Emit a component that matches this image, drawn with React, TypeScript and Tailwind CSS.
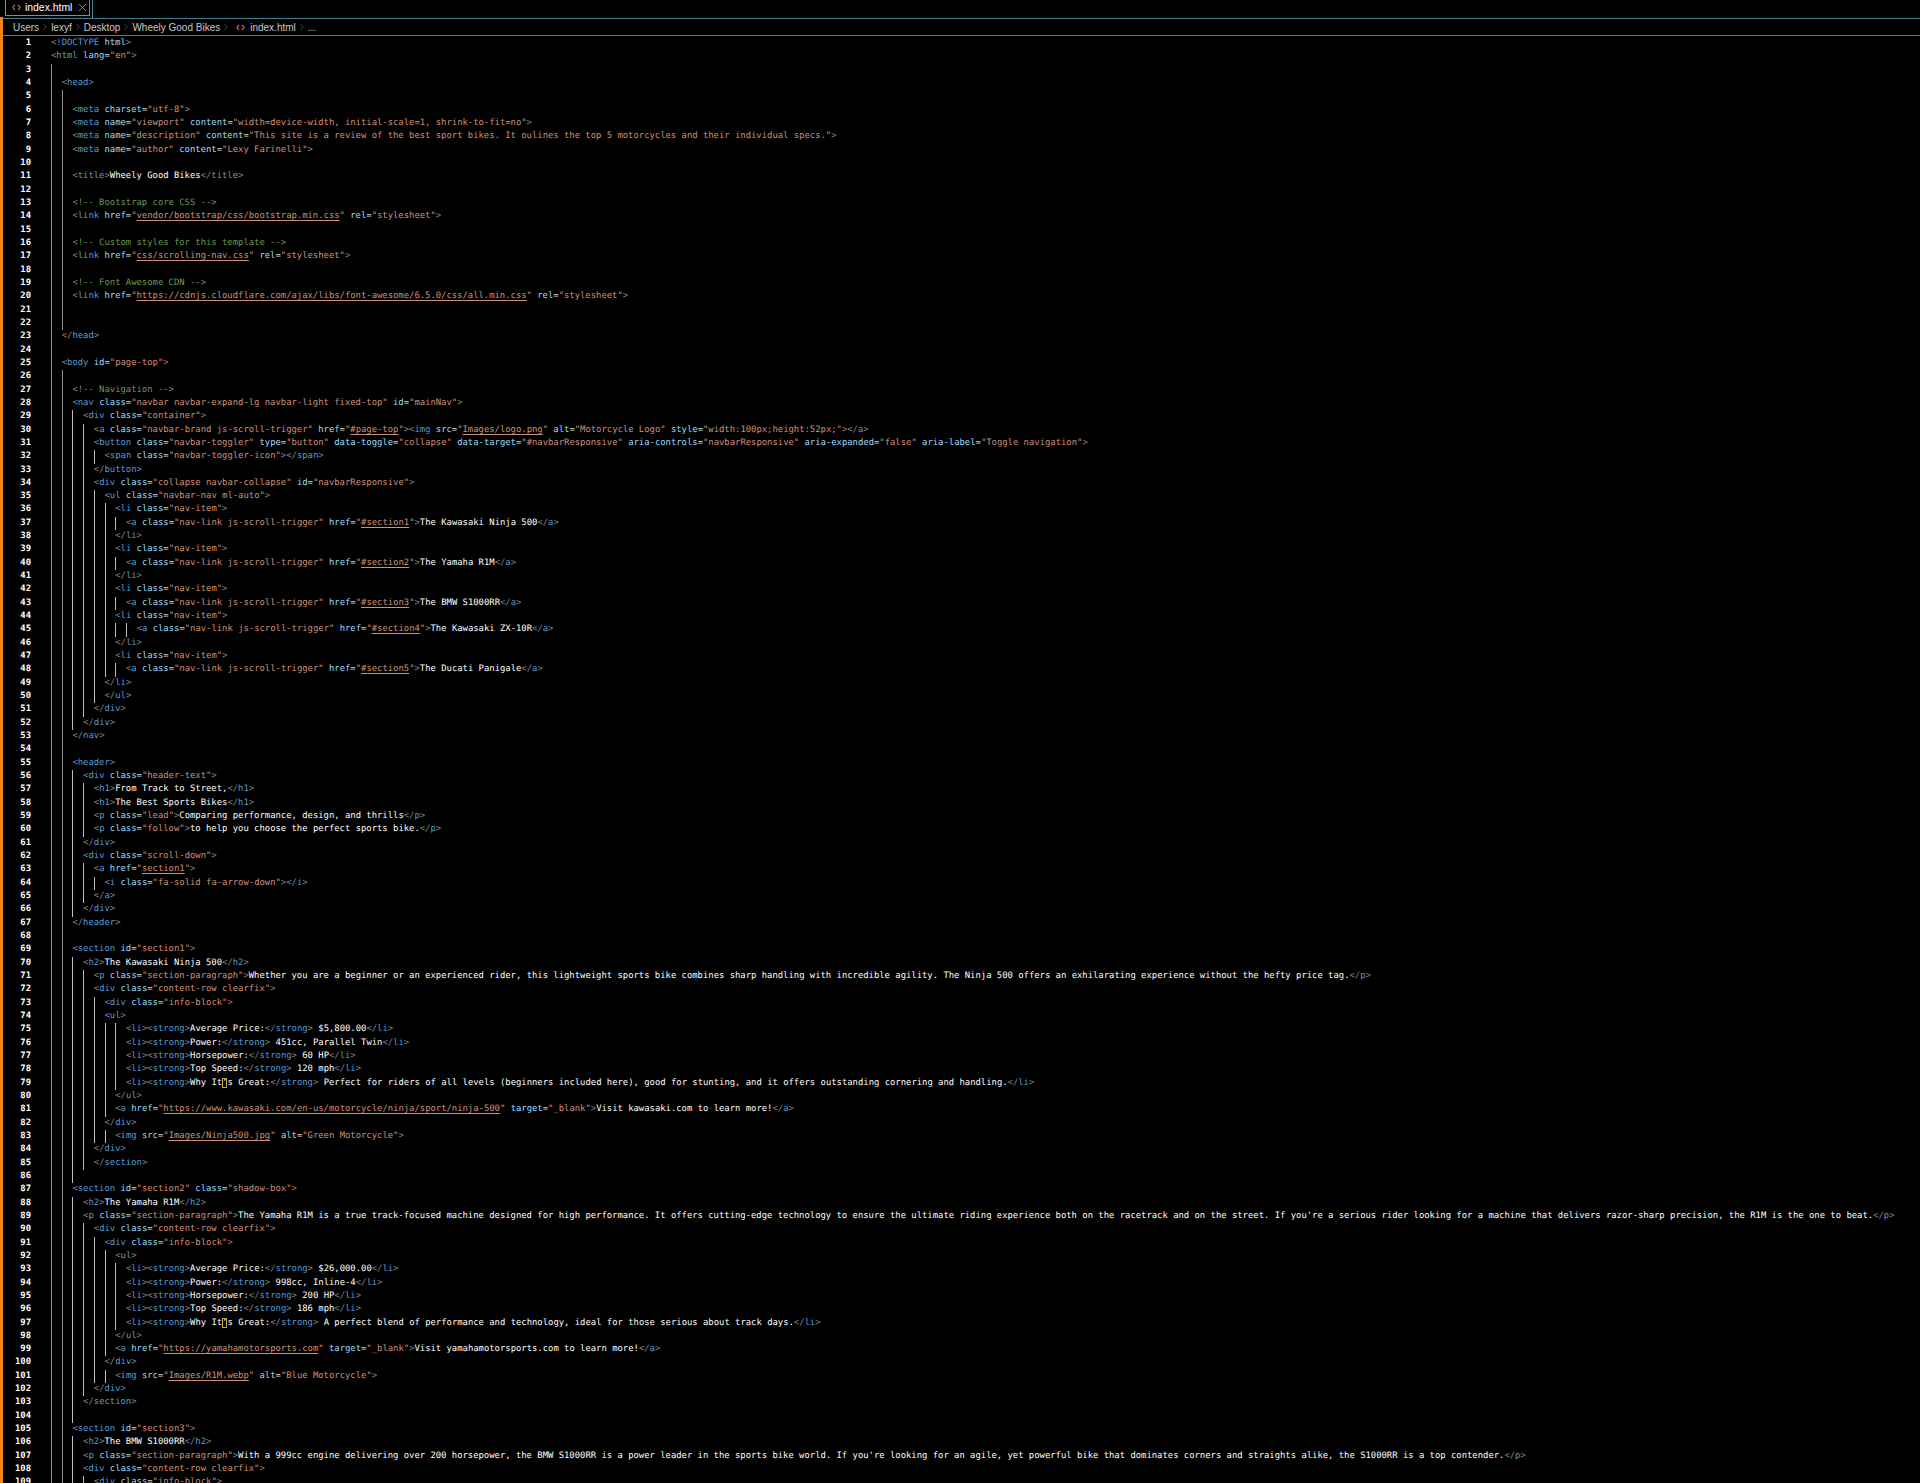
import React from 'react'
import { ChevronRight, X } from 'lucide-react'

// the file shown in the editor, indentation included
const source = `<!DOCTYPE html>
<html lang="en">

  <head>

    <meta charset="utf-8">
    <meta name="viewport" content="width=device-width, initial-scale=1, shrink-to-fit=no">
    <meta name="description" content="This site is a review of the best sport bikes. It oulines the top 5 motorcycles and their individual specs.">
    <meta name="author" content="Lexy Farinelli">

    <title>Wheely Good Bikes</title>

    <!-- Bootstrap core CSS -->
    <link href="vendor/bootstrap/css/bootstrap.min.css" rel="stylesheet">

    <!-- Custom styles for this template -->
    <link href="css/scrolling-nav.css" rel="stylesheet">

    <!-- Font Awesome CDN -->
    <link href="https://cdnjs.cloudflare.com/ajax/libs/font-awesome/6.5.0/css/all.min.css" rel="stylesheet">


  </head>

  <body id="page-top">

    <!-- Navigation -->
    <nav class="navbar navbar-expand-lg navbar-light fixed-top" id="mainNav">
      <div class="container">
        <a class="navbar-brand js-scroll-trigger" href="#page-top"><img src="Images/logo.png" alt="Motorcycle Logo" style="width:100px;height:52px;"></a>
        <button class="navbar-toggler" type="button" data-toggle="collapse" data-target="#navbarResponsive" aria-controls="navbarResponsive" aria-expanded="false" aria-label="Toggle navigation">
          <span class="navbar-toggler-icon"></span>
        </button>
        <div class="collapse navbar-collapse" id="navbarResponsive">
          <ul class="navbar-nav ml-auto">
            <li class="nav-item">
              <a class="nav-link js-scroll-trigger" href="#section1">The Kawasaki Ninja 500</a>
            </li>
            <li class="nav-item">
              <a class="nav-link js-scroll-trigger" href="#section2">The Yamaha R1M</a>
            </li>
            <li class="nav-item">
              <a class="nav-link js-scroll-trigger" href="#section3">The BMW S1000RR</a>
            <li class="nav-item">
                <a class="nav-link js-scroll-trigger" href="#section4">The Kawasaki ZX-10R</a>
            </li>
            <li class="nav-item">
              <a class="nav-link js-scroll-trigger" href="#section5">The Ducati Panigale</a>
          </li>
          </ul>
        </div>
      </div>
    </nav>

    <header>
      <div class="header-text">
        <h1>From Track to Street,</h1>
        <h1>The Best Sports Bikes</h1>
        <p class="lead">Comparing performance, design, and thrills</p>
        <p class="follow">to help you choose the perfect sports bike.</p>
      </div>
      <div class="scroll-down">
        <a href="section1">
          <i class="fa-solid fa-arrow-down"></i>
        </a>
      </div>
    </header>

    <section id="section1">
      <h2>The Kawasaki Ninja 500</h2>
        <p class="section-paragraph">Whether you are a beginner or an experienced rider, this lightweight sports bike combines sharp handling with incredible agility. The Ninja 500 offers an exhilarating experience without the hefty price tag.</p>
        <div class="content-row clearfix">
          <div class="info-block">
          <ul>
              <li><strong>Average Price:</strong> $5,800.00</li>
              <li><strong>Power:</strong> 451cc, Parallel Twin</li>
              <li><strong>Horsepower:</strong> 60 HP</li>
              <li><strong>Top Speed:</strong> 120 mph</li>
              <li><strong>Why It’s Great:</strong> Perfect for riders of all levels (beginners included here), good for stunting, and it offers outstanding cornering and handling.</li>
            </ul>
            <a href="https://www.kawasaki.com/en-us/motorcycle/ninja/sport/ninja-500" target="_blank">Visit kawasaki.com to learn more!</a>
          </div>
            <img src="Images/Ninja500.jpg" alt="Green Motorcycle">
        </div>
        </section>

    <section id="section2" class="shadow-box">
      <h2>The Yamaha R1M</h2>
      <p class="section-paragraph">The Yamaha R1M is a true track-focused machine designed for high performance. It offers cutting-edge technology to ensure the ultimate riding experience both on the racetrack and on the street. If you're a serious rider looking for a machine that delivers razor-sharp precision, the R1M is the one to beat.</p>
        <div class="content-row clearfix">
          <div class="info-block">
            <ul>
              <li><strong>Average Price:</strong> $26,000.00</li>
              <li><strong>Power:</strong> 998cc, Inline-4</li>
              <li><strong>Horsepower:</strong> 200 HP</li>
              <li><strong>Top Speed:</strong> 186 mph</li>
              <li><strong>Why It’s Great:</strong> A perfect blend of performance and technology, ideal for those serious about track days.</li>
            </ul>
            <a href="https://yamahamotorsports.com" target="_blank">Visit yamahamotorsports.com to learn more!</a>
          </div>
            <img src="Images/R1M.webp" alt="Blue Motorcycle">
        </div>
      </section>

    <section id="section3">
      <h2>The BMW S1000RR</h2>
      <p class="section-paragraph">With a 999cc engine delivering over 200 horsepower, the BMW S1000RR is a power leader in the sports bike world. If you're looking for an agile, yet powerful bike that dominates corners and straights alike, the S1000RR is a top contender.</p>
      <div class="content-row clearfix">
        <div class="info-block">`.split('\n')

const indentOf = (line: string) => line.length - line.trimStart().length

// blank lines take their guides from the neighbours, like the editor does
function guideDepth(index: number) {
  const line = source[index]
  if (line.trim()) return Math.floor(indentOf(line) / 2)
  let p = index - 1
  while (p >= 0 && !source[p].trim()) p--
  let n = index + 1
  while (n < source.length && !source[n].trim()) n++
  const prev = indentOf(source[p])
  const next = indentOf(source[n])
  return Math.floor((prev > next ? next + 2 : next) / 2)
}

type Token = { text: string; cls: string }

const BRACKET = 'text-[#808080]'
const TAG = 'text-[#569cd6]'
const ATTR = 'text-[#9cdcfe]'
const STR = 'text-[#ce9178]'
const LINK = 'underline decoration-[#ce9178] underline-offset-[2px] [text-decoration-skip-ink:none]'
const COMMENT = 'text-[#6a9955]'
const TEXT = 'text-white'

function tokenize(code: string): Token[] {
  const out: Token[] = []
  if (code.startsWith('<!--')) return [{ text: code, cls: COMMENT }]
  const re = /(<\/?!?)([\w-]+)|([\w-]+)(=)("[^"]*")|(\/?>)|(\s+)|([\w-]+)/g
  let inTag = false
  let pos = 0
  while (pos < code.length) {
    if (!inTag) {
      const lt = code.indexOf('<', pos)
      const end = lt === -1 ? code.length : lt
      if (end > pos) out.push({ text: code.slice(pos, end), cls: TEXT })
      pos = end
      if (lt === -1) break
    }
    re.lastIndex = pos
    const m = re.exec(code)
    if (!m) break
    pos = re.lastIndex
    if (m[1]) {
      out.push({ text: m[1], cls: BRACKET }, { text: m[2], cls: TAG })
      inTag = true
    } else if (m[3]) {
      out.push({ text: m[3], cls: ATTR }, { text: m[4], cls: 'text-[#d4d4d4]' })
      const value = m[5].slice(1, -1)
      const isLink = m[3] === 'href' || m[3] === 'src'
      out.push({ text: '"', cls: STR })
      if (value) out.push({ text: value, cls: isLink ? `${STR} ${LINK}` : STR })
      out.push({ text: '"', cls: STR })
    } else if (m[6]) {
      out.push({ text: m[6], cls: BRACKET })
      inTag = false
    } else if (m[7]) {
      out.push({ text: m[7], cls: TEXT })
    } else if (m[8]) {
      out.push({ text: m[8], cls: ATTR })
    }
  }
  return out
}

function TokenText({ token }: { token: Token }) {
  if (!token.text.includes('’')) return <span className={token.cls}>{token.text}</span>
  const [before, after] = token.text.split('’')
  return (
    <span className={token.cls}>
      {before}
      <span className="outline outline-1 -outline-offset-1 outline-[#d9a441]">’</span>
      {after}
    </span>
  )
}

function CodeLine({ index }: { index: number }) {
  const line = source[index]
  const depth = guideDepth(index)
  const indent = indentOf(line)
  const guides = Array.from({ length: depth }, (_, i) => i)
  return (
    <div className="flex h-[13.33px] leading-[13.33px] whitespace-pre">
      <div className="w-[28px] shrink-0 text-right font-bold text-white">{index + 1}</div>
      <div className="w-[20px] shrink-0" />
      {guides.map((g) => (
        <span
          key={g}
          className={`h-full w-[10.71px] shrink-0 border-l ${g < 2 ? 'border-[#8c8c8c]' : 'border-[#bdbdbd]'}`}
        />
      ))}
      {line.trim() && (
        <span className="shrink-0">
          {' '.repeat(indent - depth * 2)}
          {tokenize(line.trim()).map((t, i) => (
            <TokenText key={i} token={t} />
          ))}
        </span>
      )}
    </div>
  )
}

function HtmlIcon() {
  return (
    <svg width="9" height="7" viewBox="0 0 9 7" fill="none" stroke="#d4773a" strokeWidth="1.1" className="shrink-0">
      <path d="M3 0.8 0.8 3.5 3 6.2" />
      <path d="M6 0.8 8.2 3.5 6 6.2" />
    </svg>
  )
}

function Crumb({ children }: { children: React.ReactNode }) {
  return <span className="shrink-0">{children}</span>
}

function Sep() {
  return <ChevronRight size={10} strokeWidth={1} className="mx-px shrink-0 text-[#b0b0b0]" />
}

export default function App() {
  return (
    <div className="flex h-[1483px] w-[1920px] flex-col overflow-hidden bg-black font-['Liberation_Sans',sans-serif]">
      {/* tab strip */}
      <div className="h-[19px] shrink-0 pl-[3px]">
        <div className="h-full border-b border-[#3f8296]">
          <div className="flex h-[18px] w-[90px] border-r border-[#3f8296] pl-[2px]">
            <div className="flex h-[16px] w-[85px] items-center border-x border-b border-[#c77a35] pl-[6px] text-[10.4px] text-white">
              <HtmlIcon />
              <span className="ml-[4px]">index.html</span>
              <X size={13} strokeWidth={1.1} className="ml-[4px] shrink-0 text-[#d0d0d0]" />
            </div>
          </div>
        </div>
      </div>

      <div className="flex min-h-0 flex-1">
        {/* active border of the editor group */}
        <div className="-mt-[2px] w-[3px] shrink-0 bg-[#f38518]" />
        <div className="min-w-0 flex-1">
          {/* breadcrumb */}
          <div className="flex h-[17px] items-center border-b border-[#3f8296] pl-[10px] text-[10px] text-[#c8c8c8]">
            <Crumb>Users</Crumb>
            <Sep />
            <Crumb>lexyf</Crumb>
            <Sep />
            <Crumb>Desktop</Crumb>
            <Sep />
            <Crumb>Wheely Good Bikes</Crumb>
            <Sep />
            <span className="ml-[4px] mr-[5px]">
              <HtmlIcon />
            </span>
            <Crumb>index.html</Crumb>
            <Sep />
            <Crumb>...</Crumb>
          </div>
          {/* code */}
          <div className="pt-px font-['DejaVu_Sans_Mono',monospace] text-[8.9px] [text-rendering:geometricPrecision]">
            {source.map((_, i) => (
              <CodeLine key={i} index={i} />
            ))}
          </div>
        </div>
      </div>
    </div>
  )
}
